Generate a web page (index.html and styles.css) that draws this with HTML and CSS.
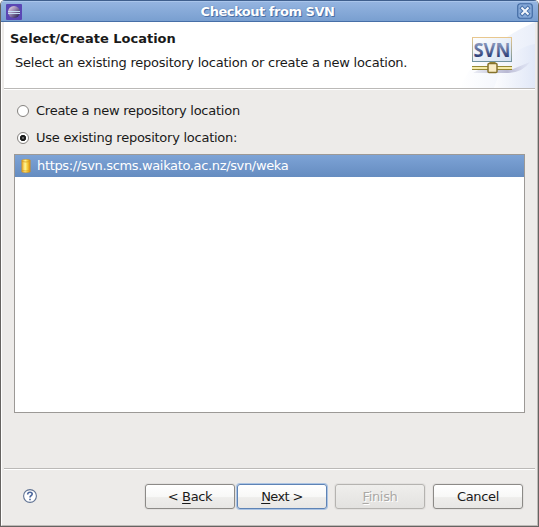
FILE: index.html
```html
<!DOCTYPE html>
<html lang="en">
<head>
<meta charset="utf-8">
<title>Checkout from SVN</title>
<link rel="stylesheet" href="styles.css">
</head>
<body>
<main class="window">
  <header class="titlebar">
    <svg class="app-icon" width="16" height="16" viewBox="0 0 16 16">
      <defs><linearGradient id="globe" x1="0" y1="0" x2="1" y2="1"><stop offset="0" stop-color="#f4e4ee"/><stop offset=".4" stop-color="#a08fb8"/><stop offset="1" stop-color="#171040"/></linearGradient></defs>
      <rect width="16" height="16" rx="1" fill="#5a46b4"/>
      <circle cx="8" cy="8" r="6" fill="url(#globe)"/>
      <path d="M2 7.5H14M2 9.5H14" stroke="#c6def5"/>
    </svg>
    <h1 class="title">Checkout from SVN</h1>
    <button class="close" aria-label="Close">
      <svg width="16" height="16" viewBox="0 0 16 16">
        <rect x=".75" y=".75" width="14.5" height="14.5" rx="2.5" fill="#86a9d8" stroke="#416aa3" stroke-width="1.2"/>
        <path d="M5.2 5.2l5.6 5.6M10.8 5.2l-5.6 5.6" stroke="#4a72ab" stroke-width="4" stroke-linecap="square"/>
        <path d="M5.2 5.2l5.6 5.6M10.8 5.2l-5.6 5.6" stroke="#f4f7fc" stroke-width="2" stroke-linecap="square"/>
      </svg>
    </button>
  </header>
  <div class="client">
    <section class="banner">
      <div class="heading">
        <h2>Select/Create Location</h2>
        <p>Select an existing repository location or create a new location.</p>
      </div>
      <svg class="banner-art" width="75" height="66" viewBox="0 0 75 66">
        <defs>
          <linearGradient id="wash" x1="0" y1="0" x2="1" y2="0"><stop offset="0" stop-color="#fff"/><stop offset="1" stop-color="#dce4f6"/></linearGradient>
          <linearGradient id="frame" x1="0" y1="0" x2="0" y2="1"><stop offset="0" stop-color="#e8c78e"/><stop offset="1" stop-color="#72939f"/></linearGradient>
          <linearGradient id="panel" x1="0" y1="0" x2="1" y2="1"><stop offset="0" stop-color="#fff"/><stop offset="1" stop-color="#d3e0f1"/></linearGradient>
          <linearGradient id="letters" x1="0" y1="0" x2="0" y2="1"><stop offset=".3" stop-color="#8493b9"/><stop offset=".8" stop-color="#273973"/></linearGradient>
          <linearGradient id="shadow" x1="0" y1="0" x2="1" y2="0"><stop offset="0" stop-color="#bdbfd8" stop-opacity=".25"/><stop offset=".6" stop-color="#b9b9d3"/><stop offset="1" stop-color="#c5c9e2" stop-opacity=".2"/></linearGradient>
        </defs>
        <path d="M0 66C10 38 43 14 75 0V66Z" fill="url(#wash)" opacity=".6"/>
        <path d="M34 66C42 40 55 25 75 22V66Z" fill="url(#wash)" opacity=".65"/>
        <path d="M13 51L20 47H53L70 40Q63 50 49 51Z" fill="url(#shadow)"/>
        <rect x="12.5" y="15.5" width="39" height="24" fill="url(#panel)" stroke="url(#frame)"/>
        <text x="13.5" y="35" textLength="37" lengthAdjust="spacingAndGlyphs" class="svn-word" fill="url(#letters)">SVN</text>
        <path d="M12 44.5H52M12 47.5H52" stroke="#968934" stroke-width="1.2"/>
        <path d="M12 46H52" stroke="#f6ebaa" stroke-width="2"/>
        <path d="M29.5 40h6v3h-6z" fill="#968934"/>
        <rect x="28" y="41.5" width="9" height="9" rx="1" fill="#f9ecc4" stroke="#85722b" stroke-width="1.5"/>
      </svg>
    </section>
    <section class="content">
      <label class="choice"><span class="radio"></span>Create a new repository location</label>
      <label class="choice"><span class="radio checked"></span>Use existing repository location:</label>
      <div class="list">
        <div class="row">
          <svg width="10" height="14" viewBox="0 0 10 14">
            <defs><linearGradient id="gold"><stop offset="0" stop-color="#e9a51f"/><stop offset=".4" stop-color="#fff79a"/><stop offset=".65" stop-color="#f8d23e"/><stop offset="1" stop-color="#d98a13"/></linearGradient></defs>
            <path d="M.8 1Q5-.4 9.2 1V13Q5 14.4 .8 13Z" fill="url(#gold)" stroke="#d08d19" stroke-width=".5"/>
            <path d="M1 2.5Q5 3.5 9 2.5M1 11.5Q5 12.5 9 11.5" fill="none" stroke="#d69b20" stroke-width=".7"/>
          </svg>
          <span class="url">https://svn.scms.waikato.ac.nz/svn/weka</span>
        </div>
      </div>
    </section>
    <footer class="footer">
      <svg class="help" width="16" height="16" viewBox="0 0 16 16">
        <circle cx="8" cy="8" r="6.4" fill="#fff" stroke="#617393" stroke-width="1.1"/>
        <path d="M5.7 6.4V5.8Q6 4.2 8 4.2Q10.2 4.2 10.2 6Q10.2 7 9 7.7Q8 8.3 8 9.5M8 10.7V12.2" fill="none" stroke="#4a659c" stroke-width="1.6"/>
      </svg>
      <button class="button"><span>&lt; <u>B</u>ack</span></button>
      <button class="button default"><span><u>N</u>ext &gt;</span></button>
      <button class="button finish" disabled><span><u>F</u>inish</span></button>
      <button class="button cancel"><span>Cancel</span></button>
    </footer>
  </div>
</main>
</body>
</html>
```
FILE: styles.css
```css
* { box-sizing: border-box; }
body {
  margin: 0;
  background: #fff;
  color: #1a1a1a;
  font: 13px/16px "DejaVu Sans", sans-serif;
}
h1, h2, p { margin: 0; }
button { font: inherit; color: inherit; }
.window {
  display: flex;
  flex-direction: column;
  width: 539px;
  height: 527px;
  border: 1px solid #666361;
  border-top: 0;
  border-radius: 5px 5px 0 0;
  background: #edebe9;
  overflow: hidden;
}
.titlebar {
  display: flex;
  align-items: center;
  height: 22px;
  flex: none;
  padding: 0 5px;
  border-top: 1px solid #3f5f8d;
  border-bottom: 1px solid #476fa7;
  background: linear-gradient(#a9c5eb 0 1px, #94b4e0 1px, #799fd0);
}
.app-icon { flex: none; margin-top: 1px; }
.title {
  flex: 1;
  padding: 2px 4px 0 0;
  text-align: center;
  font-size: 13px;
  line-height: 18px;
  letter-spacing: -0.48px;
  color: #fff;
  text-shadow: 1px 1px 0 #4b70a6, 0 0 1px #4b70a6;
}
.close {
  width: 16px;
  height: 16px;
  padding: 0;
  border: 0;
  background: none;
}
.close svg { display: block; }
.client {
  display: flex;
  flex-direction: column;
  flex: 1;
  padding: 0 2px;
  border-left: 1px solid #fff;
  border-right: 1px solid #bdbab7;
  border-bottom: 1px solid #bdbab7;
}
.banner {
  display: flex;
  height: 68px;
  flex: none;
  border-bottom: 1px solid #fff;
  background: linear-gradient(#fff 66px, #bbb9b7 66px);
}
.heading { flex: 1; padding: 9px 0 0 6px; white-space: nowrap; }
.heading h2 { font-size: 13px; line-height: 16px; }
.heading p { margin: 8px 0 0 5px; letter-spacing: -0.23px; }
.banner-art { flex: none; }
.svn-word { font: bold 20px "Open Sans", sans-serif; }
.content { flex: 1; padding: 13px 10px 0 10px; }
.choice {
  display: flex;
  align-items: center;
  gap: 7px;
  height: 16px;
  margin: 0 0 11px 2px;
  letter-spacing: -0.25px;
}
.radio {
  width: 12px;
  height: 12px;
  margin-left: 1px;
  border: 1px solid #85827f;
  border-radius: 50%;
  background: #fff;
}
.checked { background: radial-gradient(circle, #666 0 1px, #1c1c1c 1.5px 2.8px, #fff 3.5px); }
.list {
  height: 259px;
  margin-top: -3px;
  border: 1px solid #9c9996;
  background: #fff;
}
.row {
  display: flex;
  align-items: center;
  gap: 6px;
  height: 22px;
  padding-left: 6px;
  background: linear-gradient(#7da3d6, #658cc0);
  color: #fff;
}
.url { letter-spacing: -0.35px; }
.footer {
  display: flex;
  align-items: flex-start;
  height: 57px;
  flex: none;
  padding: 14px 12px 0 18px;
  border-top: 1px solid #bbb9b7;
  box-shadow: inset 0 1px #fff;
}
.help { margin: 5px auto 0 0; }
.button {
  width: 90px;
  height: 25px;
  margin: 1px 2px 0 0;
  padding: 0;
  border: 1px solid #8c8a87;
  border-radius: 3px;
  background: linear-gradient(#fff, #f8f8f7 50%, #eeedeb 55%, #e8e7e5);
  box-shadow: 0 0 0 1px #e3e1df;
  letter-spacing: -0.35px;
}
.button u { text-underline-offset: 2px; text-decoration-thickness: 1px; }
.default { border-color: #5e83b5; box-shadow: 0 0 0 1px #acc4e3; letter-spacing: -0.6px; }
.finish {
  margin-left: 6px;
  margin-right: 8px;
  border-color: #b5b3b0;
  background: linear-gradient(#efeeec, #e3e2e0);
  color: #aaa8a5;
  text-shadow: 1px 1px #fff;
}
.cancel { margin-right: 0; }
```
